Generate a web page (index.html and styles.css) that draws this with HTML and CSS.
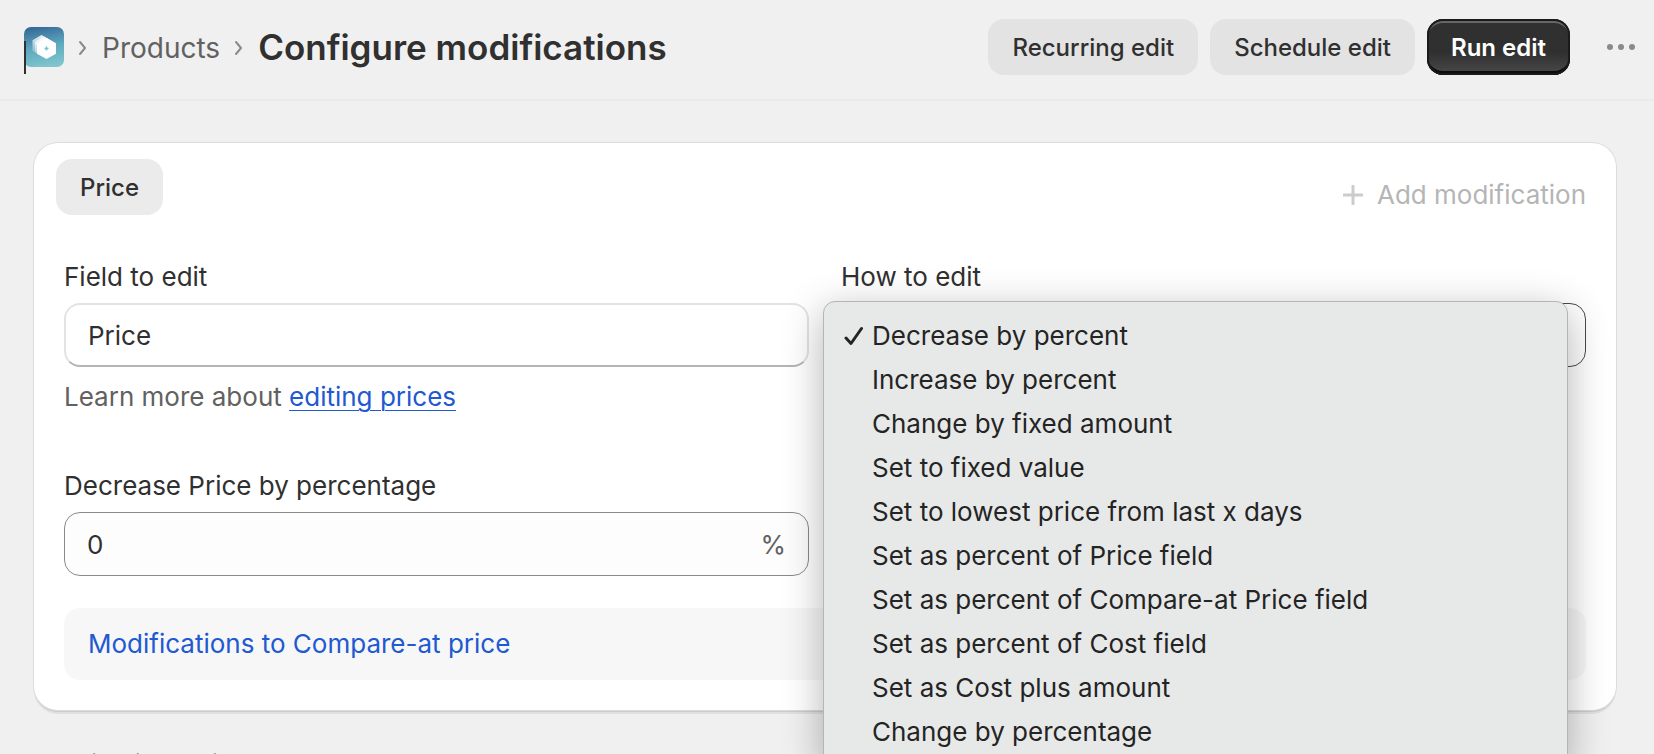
FILE: index.html
```html
<!DOCTYPE html>
<html lang="en">
<head>
    <meta charset="UTF-8">
    <meta name="viewport" content="width=device-width, initial-scale=1.0">
    <title>Configure modifications</title>
    <link rel="stylesheet" href="styles.css">
</head>
<body>
    <header class="page-header">
        <nav class="breadcrumbs" aria-label="Breadcrumb">
            <a href="#" class="app-logo" aria-label="Home">
                <svg width="40" height="40" viewBox="0 0 40 40">
                    <defs>
                        <linearGradient id="logoBg" x1="0.4" y1="0" x2="0.6" y2="1">
                            <stop offset="0" stop-color="#376c99"/>
                            <stop offset="0.5" stop-color="#5fa9bf"/>
                            <stop offset="1" stop-color="#7fc6ce"/>
                        </linearGradient>
                        <linearGradient id="logoFade" x1="0" y1="0" x2="0" y2="1">
                            <stop offset="0" stop-color="#fff" stop-opacity="0.9"/>
                            <stop offset="1" stop-color="#fff" stop-opacity="0.1"/>
                        </linearGradient>
                    </defs>
                    <rect width="40" height="40" rx="7" fill="url(#logoBg)"/>
                    <path d="M17.500 8l9 5.200v10.600l-9 5.200-9-5.200V13.200z" fill="url(#logoFade)"/>
                    <path d="M20 9.500l9 5.200v10.600l-9 5.200-9-5.200V14.700z" fill="url(#logoFade)"/>
                    <path d="M22.500 11l9.500 5.300v10.500l-9.500 5.300-9.500-5.300V16.300z" fill="#fff"/>
                    <path d="M22.500 19.500v4M20.500 21.500h4" stroke="#7cc0d2" stroke-width="1.500"/>
                </svg>
            </a>
            <svg class="chevron" width="10" height="16" viewBox="0 0 10 16"><path d="M2 2l5 6-5 6"/></svg>
            <a href="#" class="crumb">Products</a>
            <svg class="chevron" width="10" height="16" viewBox="0 0 10 16"><path d="M2 2l5 6-5 6"/></svg>
            <h1>Configure modifications</h1>
        </nav>
        <div class="actions">
            <button type="button" class="btn">Recurring edit</button>
            <button type="button" class="btn">Schedule edit</button>
            <button type="button" class="btn primary-btn">Run edit</button>
            <button type="button" class="more-btn" aria-label="More actions">
                <svg width="30" height="8" viewBox="0 0 30 8"><circle cx="4" cy="4" r="3"/><circle cx="15" cy="4" r="3"/><circle cx="26" cy="4" r="3"/></svg>
            </button>
        </div>
    </header>

    <main>
        <section class="card">
            <div class="card-top">
                <button type="button" class="btn tab">Price</button>
                <button type="button" class="add-btn" disabled>
                    <svg width="20" height="20" viewBox="0 0 20 20"><path d="M10 1v18M1 10h18"/></svg>
                    Add modification
                </button>
            </div>

            <div class="fields">
                <div class="field">
                    <label for="fieldToEdit">Field to edit</label>
                    <select id="fieldToEdit" class="control">
                        <option>Price</option>
                    </select>
                    <p class="hint">Learn more about <a href="#">editing prices</a></p>
                </div>

                <div class="field">
                    <label for="howToEdit">How to edit</label>
                    <select id="howToEdit" class="control active">
                        <option>Decrease by percent</option>
                    </select>
                    <ul class="menu" role="listbox" aria-label="How to edit">
                        <li role="option" aria-selected="true">
                            <svg class="check" width="20" height="20" viewBox="0 0 20 20"><path d="M2 12l5 5.500L17.500 2.500"/></svg>
                            Decrease by percent
                        </li>
                        <li role="option">Increase by percent</li>
                        <li role="option">Change by fixed amount</li>
                        <li role="option">Set to fixed value</li>
                        <li role="option">Set to lowest price from last x days</li>
                        <li role="option">Set as percent of Price field</li>
                        <li role="option">Set as percent of Compare-at Price field</li>
                        <li role="option">Set as percent of Cost field</li>
                        <li role="option">Set as Cost plus amount</li>
                        <li role="option">Change by percentage</li>
                    </ul>
                </div>

                <div class="field">
                    <label for="percentage">Decrease Price by percentage</label>
                    <div class="control number">
                        <input type="text" id="percentage" value="0" inputmode="decimal">
                        <span class="suffix">%</span>
                    </div>
                </div>
            </div>

            <div class="related">
                <a href="#">Modifications to Compare-at price</a>
            </div>
        </section>

        <h2>Previewing edit on 100 products</h2>
    </main>
</body>
</html>
```
FILE: styles.css
```css
* {
    box-sizing: border-box;
}
body {
    font-family: 'Inter', sans-serif;
    font-size: 26px;
    line-height: 40px;
    margin: 0;
    height: 100vh;
    overflow: hidden;
    background: #f0f0f0;
    color: #303030;
}
button, input, select {
    font: inherit;
    color: inherit;
}
.page-header {
    display: flex;
    justify-content: space-between;
    align-items: center;
    padding: 19px 18px 24px 24px;
    border-bottom: 2px solid #eaeaea;
}
.breadcrumbs {
    display: flex;
    align-items: center;
    gap: 14px;
}
.app-logo {
    position: relative;
    display: flex;
}
/* text caret next to the logo */
.app-logo::after {
    content: "";
    position: absolute;
    left: 0;
    top: 14px;
    width: 2px;
    height: 33px;
    background: #303030;
}
.chevron {
    margin-top: 2px;
    fill: none;
    stroke: #8a8a8a;
    stroke-width: 2;
    stroke-linecap: round;
    stroke-linejoin: round;
}
.crumb {
    padding-top: 2px;
    color: #616161;
    font-size: 28px;
    text-decoration: none;
}
h1 {
    margin: 0;
    font-size: 35px;
    font-weight: 600;
}
.actions {
    display: flex;
    align-items: center;
    gap: 12px;
}
.btn {
    height: 56px;
    padding: 2px 24px 0;
    border: none;
    border-radius: 16px;
    background: #e3e3e3;
    font-size: 24px;
    font-weight: 500;
    cursor: pointer;
}
.primary-btn {
    background: linear-gradient(#303030 60%, #4a4a4a);
    color: #fff;
    font-weight: 600;
    box-shadow: inset 0 0 0 2px #1a1a1a, inset 0 -4px 0 #0d0d0d, inset 0 4px 0 #666;
}
.more-btn {
    display: flex;
    margin-left: 24px;
    padding: 0;
    border: none;
    background: none;
    fill: #8a8a8a;
}
main {
    padding: 42px 38px 0 34px;
}
.card {
    background: #fff;
    border-radius: 24px;
    padding: 16px 30px 30px;
    box-shadow: 0 0 0 1px #dcdcdc, 0 2px 0 #ccc, 0 4px 0 #e0e0e0;
}
.card-top {
    display: flex;
    justify-content: space-between;
    margin: 0 0 42px -8px;
}
.tab {
    background: #ebebeb;
}
.add-btn {
    display: flex;
    align-items: center;
    gap: 14px;
    margin-top: 16px;
    padding: 0;
    height: 40px;
    border: none;
    background: none;
    color: #b5b5b5;
}
.add-btn svg {
    stroke: #ccc;
    stroke-width: 3;
    stroke-linecap: round;
}
.fields {
    display: grid;
    grid-template-columns: 1fr 1fr;
    gap: 49px 32px;
}
.field {
    position: relative;
}
.field label {
    display: block;
    margin-bottom: 6px;
}
.control {
    display: block;
    width: 100%;
    height: 64px;
    padding: 2px 22px 0;
    border: 2px solid #e3e3e3;
    border-bottom-color: #b5b5b5;
    border-radius: 16px;
    background: #fff;
    appearance: none;
}
.control.active {
    border: 1px solid #4a4a4a;
}
.number {
    display: flex;
    align-items: center;
    border: 1px solid #8a8a8a;
    background: #fdfdfd;
}
.number input {
    flex: 1;
    min-width: 0;
    padding: 0;
    border: none;
    outline: none;
    background: none;
}
.suffix {
    color: #616161;
}
.hint {
    margin: 10px 0 0;
    color: #616161;
}
a {
    color: #2159d0;
}
.hint a {
    text-decoration-thickness: 1px;
    text-underline-offset: 4px;
}
.menu {
    position: absolute;
    z-index: 1;
    top: 44px;
    left: -18px;
    width: 100%;
    margin: 0;
    padding: 12px 0;
    list-style: none;
    background: #e7e9e8;
    border: 1px solid #b4b6b5;
    border-radius: 12px;
    color: #242424;
    box-shadow: 0 10px 40px rgba(0,0,0,0.3);
}
.menu li {
    position: relative;
    padding-left: 48px;
    line-height: 44px;
}
.check {
    position: absolute;
    left: 20px;
    top: 12px;
    fill: none;
    stroke: #242424;
    stroke-width: 3;
    stroke-linecap: round;
    stroke-linejoin: round;
}
.related {
    margin-top: 32px;
    padding: 16px 24px;
    border-radius: 16px;
    background: #f7f7f7;
}
.related a {
    text-decoration: none;
}
h2 {
    margin: 35px 0 0;
    font-size: 26px;
    font-weight: 600;
}
```
